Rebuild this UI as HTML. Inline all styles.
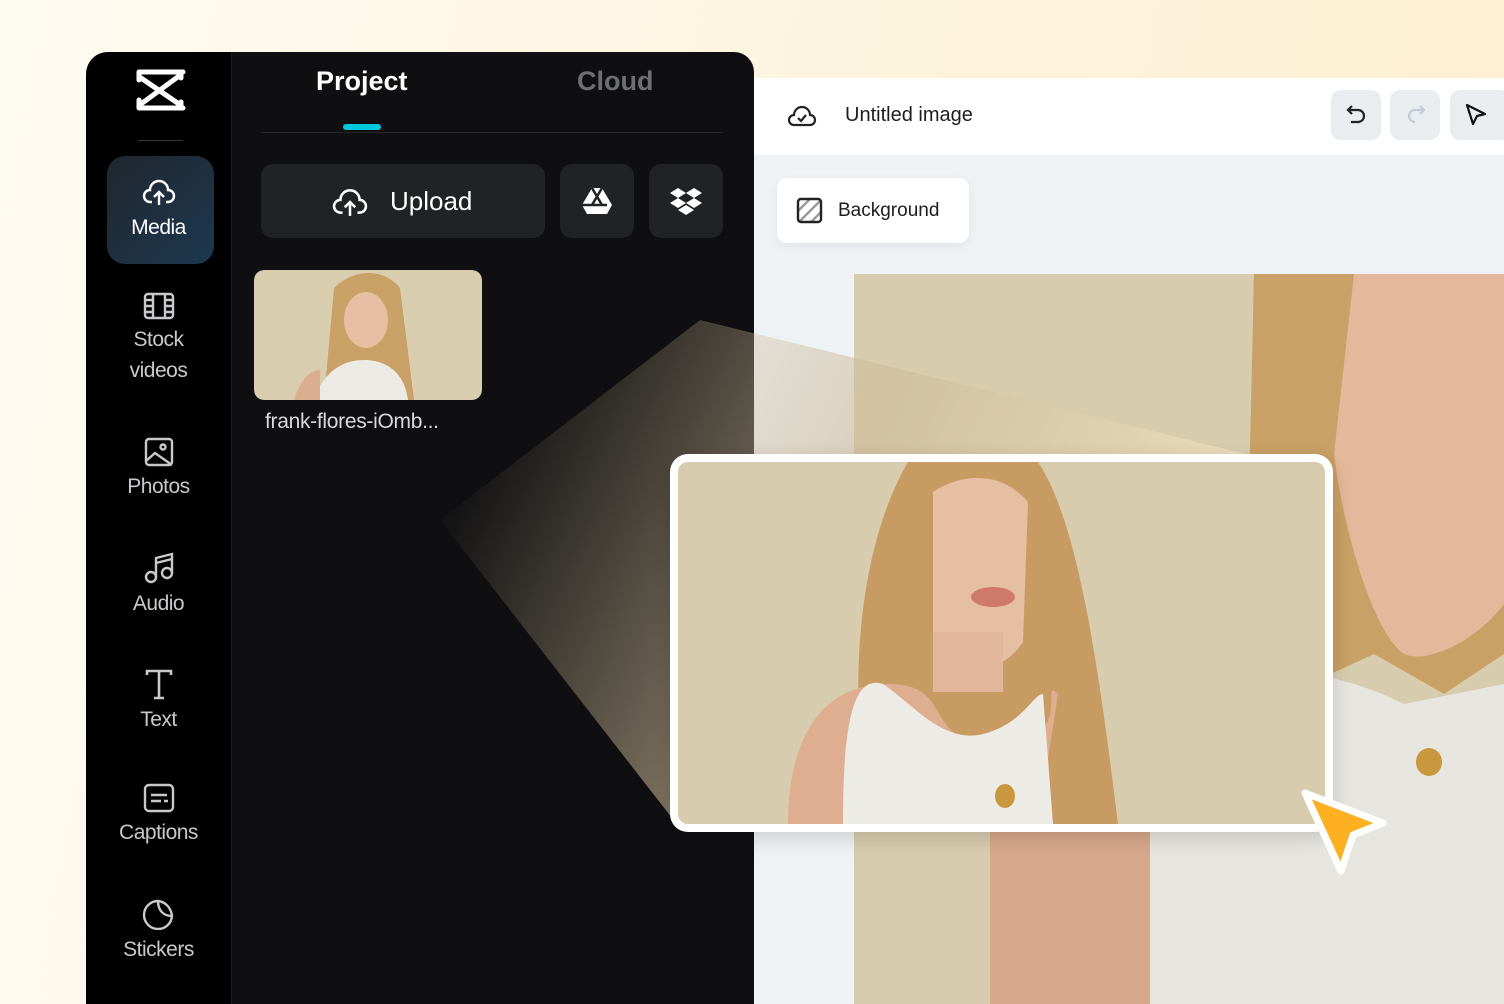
<!DOCTYPE html>
<html><head><meta charset="utf-8"><style>
*{margin:0;padding:0;box-sizing:border-box}
body{width:1504px;height:1004px;overflow:hidden;font-family:"Liberation Sans",sans-serif;background:linear-gradient(100deg,#fefbf1 0%,#fdf3dc 60%,#fdefd0 100%);position:relative}
.abs{position:absolute}
.side{left:86px;top:52px;width:145px;height:952px;background:#000;border-top-left-radius:22px}
.main{left:231px;top:52px;width:523px;height:952px;background:#0f0f11;border-top-right-radius:20px;border-left:1px solid #1c1c1f}
.nav{position:absolute;left:0;width:145px;text-align:center;color:#c9c9cc;font-size:21px;letter-spacing:-0.5px;line-height:31px}
.nav svg{display:block;margin:0 auto 4px}
.btn{background:#212226;border-radius:12px;position:absolute;top:164px;height:74px}
.editor{left:754px;top:78px;width:750px;height:926px;background:#eef2f5}
.hdr{left:754px;top:78px;width:750px;height:77px;background:#fff}
.tb{position:absolute;top:90px;width:50px;height:50px;border-radius:10px;background:#e9edf0}
</style></head><body>
<div class="abs side"></div>
<div class="abs main"></div>
<svg class="abs" style="left:135px;top:68px" width="52" height="44" viewBox="0 0 52 44"><path d="M4 4h38l6 0M4 4v8M4 40h44M4 40v-8M6 10l38 26M44 8L6 36M46 4v6M46 40v-6" stroke="#fff" stroke-width="5" fill="none" stroke-linecap="round" stroke-linejoin="round"/></svg>
<div class="abs" style="left:138px;top:140px;width:45px;height:1px;background:#3a3a3d"></div>
<div class="abs" style="left:107px;top:156px;width:107px;height:108px;border-radius:18px;background:linear-gradient(135deg,#20262e,#1c3850)"></div>
<div class="nav" style="left:86px;top:176px;color:#fff"><svg width="36" height="32" viewBox="0 0 36 32" fill="none" stroke="#fff" stroke-width="2.4"><path d="M11 26H9a6 6 0 0 1 0-12 9 9 0 0 1 18 0 6 6 0 0 1 0 12h-2M18 29V17M13 21l5-5 5 5"/></svg>Media</div>
<div class="nav" style="left:86px;top:292px"><svg width="32" height="28" viewBox="0 0 32 28" fill="none" stroke="#c9c9cc" stroke-width="2.4"><rect x="2" y="2" width="28" height="24" rx="3"/><path d="M10 2v24M22 2v24M2 14h8M22 14h8M2 8h8M2 20h8M22 8h8M22 20h8"/></svg>Stock<br>videos</div>
<div class="nav" style="left:86px;top:437px"><svg width="32" height="30" viewBox="0 0 32 30" fill="none" stroke="#c9c9cc" stroke-width="2.4"><rect x="3" y="2" width="26" height="26" rx="3"/><path d="M3 24l9-8 17 12"/><circle cx="20" cy="10" r="2.5"/></svg>Photos</div>
<div class="nav" style="left:86px;top:552px"><svg width="34" height="32" viewBox="0 0 34 32" fill="none" stroke="#c9c9cc" stroke-width="2.4"><circle cx="9" cy="25" r="5"/><circle cx="25" cy="21" r="5"/><path d="M14 25V6l16-4v19M14 11l16-4"/></svg>Audio</div>
<div class="nav" style="left:86px;top:668px"><svg width="30" height="32" viewBox="0 0 30 32" fill="none" stroke="#c9c9cc" stroke-width="2.6"><path d="M3 7V3h24v4M15 3v27M10 30h10"/></svg>Text</div>
<div class="nav" style="left:86px;top:783px"><svg width="34" height="30" viewBox="0 0 34 30" fill="none" stroke="#c9c9cc" stroke-width="2.4"><rect x="3" y="2" width="28" height="26" rx="4"/><path d="M9 12h16M9 18h10M22 18h4"/></svg>Captions</div>
<div class="nav" style="left:86px;top:898px"><svg width="34" height="32" viewBox="0 0 34 32" fill="none" stroke="#c9c9cc" stroke-width="2.4"><path d="M30 18A14 14 0 1 1 16 3c0 9 5 15 14 15zM16 3c8 1 13 7 14 15"/></svg>Stickers</div>
<div class="abs" style="left:316px;top:66px;color:#fff;font-weight:bold;font-size:27px">Project</div>
<div class="abs" style="left:577px;top:66px;color:#6e6f73;font-weight:bold;font-size:27px">Cloud</div>
<div class="abs" style="left:343px;top:124px;width:38px;height:6px;border-radius:3px;background:#00c8dd"></div>
<div class="abs" style="left:261px;top:132px;width:462px;height:1px;background:#26272b"></div>
<div class="btn" style="left:261px;width:284px"></div>
<div class="btn" style="left:560px;width:74px"></div>
<div class="btn" style="left:649px;width:74px"></div>
<svg class="abs" style="left:330px;top:185px" width="40" height="34" viewBox="0 0 36 32" fill="none" stroke="#fff" stroke-width="2.4"><path d="M11 26H9a6 6 0 0 1 0-12 9 9 0 0 1 18 0 6 6 0 0 1 0 12h-2M18 29V17M13 21l5-5 5 5"/></svg>
<div class="abs" style="left:390px;top:186px;color:#fff;font-size:26px">Upload</div>
<svg class="abs" style="left:581px;top:187px" width="32" height="28" viewBox="0 0 32 28"><path d="M11 1h10l10 17-5 9H6l-5-9z" fill="#fff"/><path d="M11 1l10 17M21 1L11 18M1 18h25" stroke="#212226" stroke-width="2.5"/></svg>
<svg class="abs" style="left:669px;top:187px" width="34" height="32" viewBox="0 0 34 32" fill="#fff"><path d="M9 1l8 5-8 5-8-5zM25 1l8 5-8 5-8-5zM9 11l8 5-8 5-8-5zM25 11l8 5-8 5-8-5zM17 18l8 5-8 5-8-5z"/></svg>
<div class="abs editor"></div>
<div class="abs hdr"></div>
<svg class="abs" style="left:787px;top:101px" width="30" height="28" viewBox="0 0 30 28" fill="none" stroke="#222" stroke-width="2.2"><path d="M9 24H7a5 5 0 0 1 0-10 8 8 0 0 1 16 0 5 5 0 0 1 0 10zM11 17l3 3 5-6"/></svg>
<div class="abs" style="left:845px;top:104px;color:#1d1d1f;font-size:20px">Untitled image</div>
<div class="tb" style="left:1331px"></div><div class="tb" style="left:1390px"></div><div class="tb" style="left:1450px;width:60px"></div>
<svg class="abs" style="left:1343px;top:102px" width="26" height="26" viewBox="0 0 26 26" fill="none" stroke="#222" stroke-width="2.2"><path d="M9 4L5 8l4 4M5 8h10a6 6 0 0 1 0 12H8"/></svg>
<svg class="abs" style="left:1403px;top:102px" width="26" height="26" viewBox="0 0 26 26" fill="none" stroke="#c4ccd3" stroke-width="2.2"><path d="M17 4l4 4-4 4M21 8h-9a6 6 0 0 0 0 12"/></svg>
<svg class="abs" style="left:1463px;top:102px" width="26" height="26" viewBox="0 0 26 26" fill="none" stroke="#111" stroke-width="2.2" stroke-linejoin="round"><path d="M4 3l18 9-8 2-4 8z"/></svg>
<div class="abs" style="left:777px;top:178px;width:192px;height:65px;background:#fff;border-radius:10px;box-shadow:0 3px 10px rgba(0,0,0,.06)"></div>
<svg class="abs" style="left:796px;top:197px" width="28" height="28" viewBox="0 0 28 28"><defs><clipPath id="c"><rect x="2" y="2" width="23" height="23"/></clipPath></defs><g clip-path="url(#c)" stroke="#999" stroke-width="2.4"><path d="M-4 20L20-4M2 26L26 2M8 32L32 8"/></g><rect x="2" y="2" width="23" height="23" rx="3" fill="none" stroke="#222" stroke-width="2.4"/></svg>
<div class="abs" style="left:838px;top:200px;color:#1d1d1f;font-size:19px">Background</div>
<svg class="abs" style="left:854px;top:274px" width="650" height="730" viewBox="0 0 650 730">
<rect width="650" height="730" fill="#d8ccae"/>
<path d="M400 0h250v380l-60 40-70-40-130 60z" fill="#c9a065"/>
<path d="M500 0h150v330c-30 40-80 60-100 50-30-20-60-120-70-200z" fill="#e4b89a"/>
<path d="M300 420c60-40 170-30 250 10l100-20v320H280z" fill="#e7e5df"/>
<path d="M136 558h160v172H136z" fill="#d7a88a"/>
<ellipse cx="575" cy="488" rx="13" ry="14" fill="#c9973d"/>
</svg>
<svg class="abs" style="left:0;top:0" width="1504" height="1004"><defs><linearGradient id="g" x1="0" y1="0" x2="1" y2="0.3"><stop offset="0.1" stop-color="#cdbb99" stop-opacity="0"/><stop offset="0.55" stop-color="#cdbb99" stop-opacity="0.6"/><stop offset="1" stop-color="#efe1c0" stop-opacity="0.85"/></linearGradient></defs>
<polygon points="700,320 1250,455 672,818 440,520" fill="url(#g)"/></svg>
<svg class="abs" style="left:254px;top:270px;border-radius:10px" width="228" height="130" viewBox="0 0 228 130"><rect width="228" height="130" rx="10" fill="#d9cdb0"/><path d="M80 18c20-20 50-20 66 0l14 112H70z" fill="#c9a065"/><ellipse cx="112" cy="50" rx="22" ry="28" fill="#e6bea2"/><path d="M60 130c10-30 30-40 50-40s40 10 44 40z" fill="#eceae4"/><path d="M40 130c6-20 16-30 26-30v30z" fill="#dcae90"/></svg>
<div class="abs" style="left:265px;top:410px;color:#d9d9dc;font-size:21px;letter-spacing:-0.3px">frank-flores-iOmb...</div>
<div class="abs" style="left:670px;top:454px;width:663px;height:378px;background:#fff;border-radius:18px;box-shadow:0 6px 20px rgba(0,0,0,.15)"></div>
<svg class="abs" style="left:678px;top:462px" width="647" height="362" viewBox="0 0 647 362"><defs><clipPath id="p"><rect width="647" height="362" rx="10"/></clipPath></defs><g clip-path="url(#p)">
<rect width="647" height="362" fill="#d8ccaf"/>
<path d="M230 0h130c40 60 60 200 80 362H200c-30-80-30-260 30-362z" fill="#c89b62"/>
<path d="M255 30c30-20 70-20 95 10l-5 140c-20 30-60 40-90 20z" fill="#e6bea2"/>
<ellipse cx="315" cy="135" rx="22" ry="10" fill="#cf7a68"/>
<path d="M255 170h70v60h-70z" fill="#e2b69a"/>
<path d="M110 362c0-80 30-140 100-140s30 60 110 60 40-70 60-50l-20 130z" fill="#dfae90"/>
<path d="M165 362c0-100 10-150 40-140 30 20 60 60 100 50s50-40 60-40l10 130z" fill="#ecebe6"/>
<ellipse cx="327" cy="334" rx="10" ry="12" fill="#c9973d"/>
</g></svg>
<svg class="abs" style="left:1295px;top:783px" width="98" height="98" viewBox="0 0 98 98"><path d="M10 10l78 30-30 12-12 36z" fill="#fdb022" stroke="#fff" stroke-width="7" stroke-linejoin="round"/></svg>
</body></html>
